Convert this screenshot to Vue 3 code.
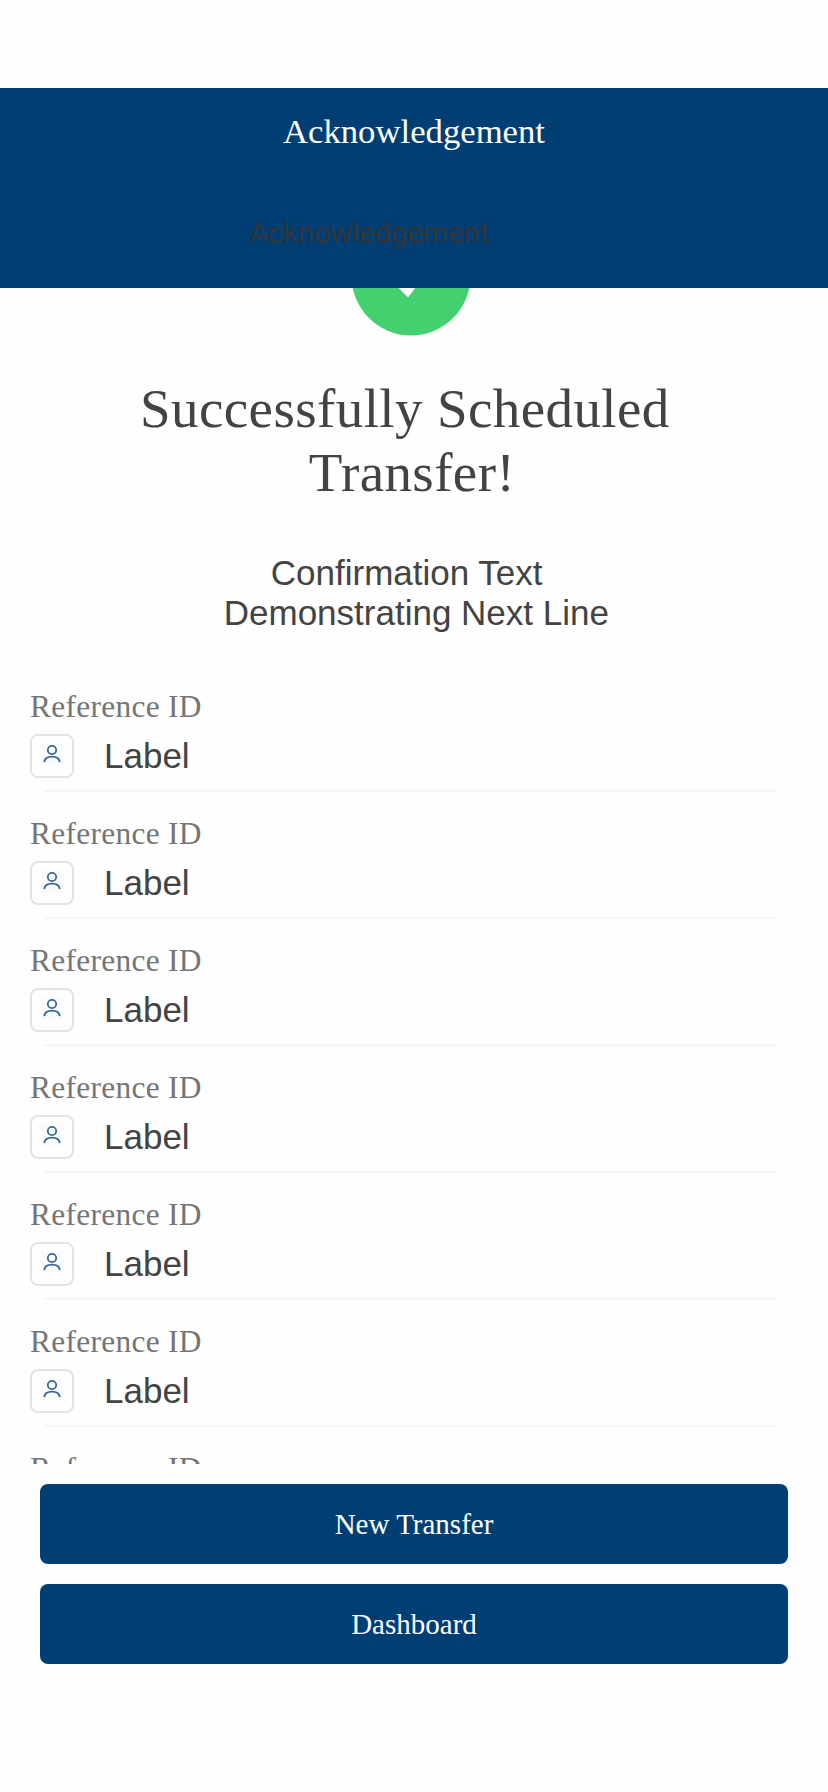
<script setup>
const items = Array.from({ length: 7 }, (_, id) => ({
  id,
  caption: 'Reference ID',
  value: 'Label',
}))
</script>

<template>
  <div class="screen">
    <header class="header">
      <h1 class="header-title">Acknowledgement</h1>
      <p class="header-sub">Acknowledgement</p>
    </header>

    <main class="content">
      <svg class="badge" viewBox="0 0 120 120">
        <circle cx="60" cy="60" r="59.5" fill="#44d06e" />
        <path d="M36 53 L56.5 73.5 L84 37" fill="none" stroke="#fff" stroke-width="10.5" />
      </svg>
      <h2 class="title">Successfully Scheduled&nbsp;<br />Transfer!</h2>
      <p class="confirm">Confirmation Text&nbsp;<br />&nbsp;Demonstrating Next Line</p>

      <ul class="list">
        <li v-for="item in items" :key="item.id" class="item">
          <div class="caption">{{ item.caption }}</div>
          <div class="row">
            <span class="icon-box">
              <svg class="icon" viewBox="0 0 22 22">
                <rect width="22" height="22" fill="#f8fafc" />
                <g fill="none" stroke="#3b6898" stroke-width="1.8">
                  <circle cx="11" cy="7" r="4.2" />
                  <path d="M3.2 19.2 C3.6 15.6 6.6 13.6 11 13.6 S18.4 15.6 18.8 19.2" />
                </g>
              </svg>
            </span>
            <span class="value">{{ item.value }}</span>
          </div>
          <div class="divider"></div>
        </li>
      </ul>
    </main>

    <footer class="actions">
      <button class="btn" type="button">New Transfer</button>
      <button class="btn" type="button">Dashboard</button>
    </footer>
  </div>
</template>

<style>
body {
  margin: 0;
  background: #fefefe;
}
</style>

<style scoped>
.screen {
  box-sizing: border-box;
  width: 828px;
  height: 1792px;
  padding-top: 88px;
  overflow: hidden;
  background: #fefefe;
  color: #434343;
  font-family: "Liberation Sans", Arial, sans-serif;
}
.header {
  position: relative;
  z-index: 1;
  box-sizing: border-box;
  height: 200px;
  padding-top: 24px;
  background: #003e74;
}
.header-title {
  margin: 0;
  color: #fff;
  font: 400 34.7px/40px "Liberation Serif", "Times New Roman", serif;
  text-align: center;
}
.header-sub {
  margin: 61px 0 0 249px;
  color: #333537;
  font: 400 29px/40px Roboto, sans-serif;
}
.content {
  display: flex;
  flex-direction: column;
  height: 1248px;
  margin-top: -72px;
  overflow: hidden;
}
.badge {
  flex: none;
  width: 120px;
  height: 120px;
  margin-left: 351px;
}
.title {
  width: 824px;
  margin: 41px 0 0;
  font: 400 55px/64px "Liberation Serif", "Times New Roman", serif;
  letter-spacing: 0.4px;
  text-align: center;
}
.confirm {
  width: 823px;
  margin: 48px 0 0;
  font-size: 35px;
  line-height: 40px;
  text-align: center;
}
.list {
  margin: 53px 0 0;
  padding: 0 50px 0 30px;
  list-style: none;
}
.item {
  height: 127px;
}
.caption {
  box-sizing: border-box;
  height: 48px;
  padding-top: 1px;
  color: #757575;
  font: 400 31.4px/40px "Liberation Serif", "Times New Roman", serif;
  letter-spacing: 0.3px;
}
.row {
  display: flex;
  align-items: center;
  gap: 30px;
  height: 44px;
}
.icon-box {
  display: flex;
  box-sizing: border-box;
  justify-content: center;
  width: 44px;
  height: 44px;
  padding-top: 7px;
  border: 2px solid #e3e3e3;
  border-radius: 8px;
}
.icon {
  width: 22px;
  height: 22px;
}
.value {
  font-size: 35px;
  line-height: 40px;
}
.divider {
  height: 2px;
  margin: 12px 0 0 14px;
  background: #f6f6f6;
}
.actions {
  display: flex;
  flex-direction: column;
  gap: 20px;
  padding: 20px 40px 0;
}
.btn {
  height: 80px;
  padding: 0;
  border: 0;
  border-radius: 8px;
  background: #003e74;
  color: #fff;
  font: 400 29px/40px "Liberation Serif", "Times New Roman", serif;
}
</style>
